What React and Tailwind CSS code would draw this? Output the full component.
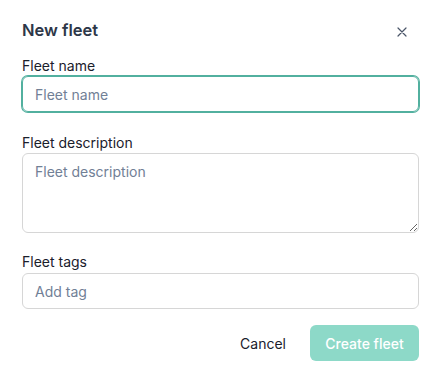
import { useState } from "react";

export default function App() {
  const [name, setName] = useState("");
  const [desc, setDesc] = useState("");
  const [tag, setTag] = useState("");

  return (
    <div className="min-h-screen bg-white pl-[22px] pr-[19px] pt-[18px] font-['Inter',sans-serif] text-[#2d3748]">
      <div className="flex items-center justify-between">
        <h2 className="text-[16.5px] font-semibold leading-[24px] text-[#2d3748]">New fleet</h2>
        <button aria-label="Close" className="mr-[12px] mt-[4px] text-[#4a5568]">
          <svg width="10" height="10" viewBox="0 0 10 10" fill="none" stroke="currentColor" strokeWidth="1.2" strokeLinecap="round">
            <path d="M1 1l8 8M9 1L1 9" />
          </svg>
        </button>
      </div>

      <form className="mt-[14px]" onSubmit={(e) => e.preventDefault()}>
        <label className="block text-[14px] font-normal leading-[20px] text-[#1a202c]">
          Fleet name
          <input
            autoFocus
            value={name}
            onChange={(e) => setName(e.target.value)}
            placeholder="Fleet name"
            className="block h-[36px] w-full rounded-[6px] border border-[#52b09f] px-[12px] text-[14px] font-normal text-[#1a202c] shadow-[0_0_0_1px_#52b09f] outline-none placeholder:text-[#718096]"
          />
        </label>

        <label className="mt-[21px] block text-[14px] font-normal leading-[20px] text-[#1a202c]">
          Fleet description
          <textarea
            value={desc}
            onChange={(e) => setDesc(e.target.value)}
            placeholder="Fleet description"
            className="block h-[80px] w-full resize-y rounded-[6px] border border-[#d6d6d6] px-[12px] py-[8px] text-[14px] font-normal leading-[20px] text-[#1a202c] outline-none placeholder:text-[#718096]"
          />
        </label>

        <label className="mt-[19px] block text-[14px] font-normal leading-[20px] text-[#1a202c]">
          Fleet tags
          <input
            value={tag}
            onChange={(e) => setTag(e.target.value)}
            placeholder="Add tag"
            className="mt-[1px] block h-[36px] w-full rounded-[6px] border border-[#d6d6d6] px-[12px] text-[14px] font-normal text-[#1a202c] outline-none placeholder:text-[#718096]"
          />
        </label>

        <div className="mt-[16px] flex items-center justify-end gap-[8px]">
          <button type="button" className="h-[36px] px-[16px] text-[14px] font-normal text-[#1a202c]">
            Cancel
          </button>
          <button
            type="submit"
            disabled
            className="h-[36px] w-[109px] rounded-[6px] bg-[#8dd9c8] text-[14px] font-medium text-white"
          >
            Create fleet
          </button>
        </div>
      </form>
    </div>
  );
}
